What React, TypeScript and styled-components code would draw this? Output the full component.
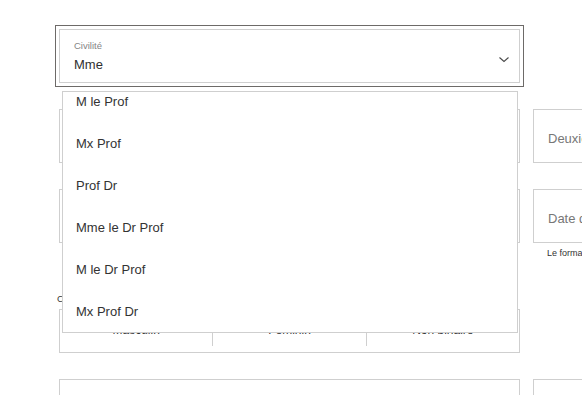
import React, { useLayoutEffect, useRef } from 'react';
import styled, { createGlobalStyle } from 'styled-components';

const Global = createGlobalStyle`
  html, body { margin: 0; padding: 0; background: #ffffff; overflow: hidden; }
  body { font-family: "Liberation Sans", Arial, sans-serif; color: #333333; }
  * { box-sizing: border-box; }
`;

const Page = styled.div`
  width: 582px;
  height: 395px;
  overflow: hidden;
  padding: 29px 0 0 59px;
`;

const Row = styled.div<{ $mt?: number }>`
  display: grid;
  grid-template-columns: 461px 461px;
  column-gap: 13px;
  width: max-content;
  margin-top: ${(p) => p.$mt ?? 0}px;
`;

const Cell = styled.div`
  display: flex;
  flex-direction: column;
  position: relative;
`;

const SelectBox = styled.div`
  height: 54px;
  border: 1px solid #cfcfcf;
  outline: 1px solid #6d6a68;
  outline-offset: 3px;
  background: #fff;
  display: flex;
  align-items: center;
  justify-content: space-between;
  padding: 0 10px 0 14px;
`;

const SelectText = styled.div`
  display: flex;
  flex-direction: column;
`;

const FloatLabel = styled.span`
  font-size: 9.5px;
  line-height: 12px;
  color: #858585;
`;

const Value = styled.span`
  font-size: 13px;
  line-height: 16px;
  margin-top: 5px;
  color: #2f2f2f;
`;

const Chevron = styled.svg`
  width: 10px;
  height: 5px;
  margin-top: 7px;
  overflow: visible;
`;

const Listbox = styled.ul`
  position: absolute;
  top: 62px;
  left: 3px;
  width: 456px;
  height: 242px;
  margin: 0;
  padding: 0;
  list-style: none;
  background: #fff;
  border: 1px solid #cfcfcf;
  overflow-y: auto;
  scrollbar-width: none;
  z-index: 10;
  &::-webkit-scrollbar { display: none; }
`;

const Option = styled.li`
  height: 42px;
  display: flex;
  align-items: center;
  padding-left: 13px;
  font-size: 13px;
  color: #333;
`;

const Field = styled.div`
  height: 54px;
  border: 1px solid #cfcfcf;
  background: #fff;
  display: flex;
  align-items: center;
  padding: 4px 14px 0 14px;
  font-size: 13px;
  color: #777;
  white-space: nowrap;
  overflow: hidden;
`;

const Helper = styled.span`
  margin: 5px 0 0 14px;
  font-size: 9px;
  line-height: 11px;
  color: #333;
  white-space: nowrap;
`;

const GroupLabel = styled.span`
  font-size: 9.5px;
  line-height: 12px;
  color: #333;
  margin-left: -2px;
  white-space: nowrap;
`;

const Segmented = styled.div`
  margin-top: 4px;
  height: 44px;
  border: 1px solid #cfcfcf;
  display: flex;
  align-items: stretch;
`;

const Segment = styled.div`
  flex: 1;
  display: flex;
  align-items: center;
  justify-content: center;
  padding-bottom: 2px;
  font-size: 12px;
  color: #333;
`;

const Divider = styled.div`
  width: 1px;
  background: #cfcfcf;
  margin: 6px 0 6px;
`;

const options = [
  'Mme',
  'M',
  'Mx',
  'Dr',
  'Prof',
  'M le Prof',
  'Mx Prof',
  'Prof Dr',
  'Mme le Dr Prof',
  'M le Dr Prof',
  'Mx Prof Dr',
];

export default function App() {
  const listRef = useRef<HTMLUListElement>(null);
  useLayoutEffect(() => {
    if (listRef.current) listRef.current.scrollTop = 5 * 42 + 12;
  }, []);

  return (
    <>
      <Global />
      <Page>
        <Row>
          <Cell>
            <SelectBox>
              <SelectText>
                <FloatLabel>Civilité</FloatLabel>
                <Value>Mme</Value>
              </SelectText>
              <Chevron viewBox="0 0 10 5">
                <polyline points="0.5,0.5 5,4.5 9.5,0.5" fill="none" stroke="#4a4a4a" strokeWidth="1.1" />
              </Chevron>
            </SelectBox>
            <Listbox ref={listRef} role="listbox">
              {options.map((o) => (
                <Option key={o} role="option">{o}</Option>
              ))}
            </Listbox>
          </Cell>
          <Cell />
        </Row>
        <Row $mt={26}>
          <Field>Prénom</Field>
          <Field>Deuxième prénom</Field>
        </Row>
        <Row $mt={26}>
          <Field>Nom</Field>
          <Cell>
            <Field>Date de naissance</Field>
            <Helper>Le format de la date est JJ/MM/AAAA</Helper>
          </Cell>
        </Row>
        <Row $mt={34}>
          <Cell>
            <GroupLabel>Choisissez votre genre</GroupLabel>
            <Segmented>
              <Segment>Masculin</Segment>
              <Divider />
              <Segment>Féminin</Segment>
              <Divider />
              <Segment>Non binaire</Segment>
            </Segmented>
          </Cell>
          <Cell />
        </Row>
        <Row $mt={26}>
          <Field>Adresse e-mail</Field>
          <Field>Numéro de téléphone</Field>
        </Row>
      </Page>
    </>
  );
}
